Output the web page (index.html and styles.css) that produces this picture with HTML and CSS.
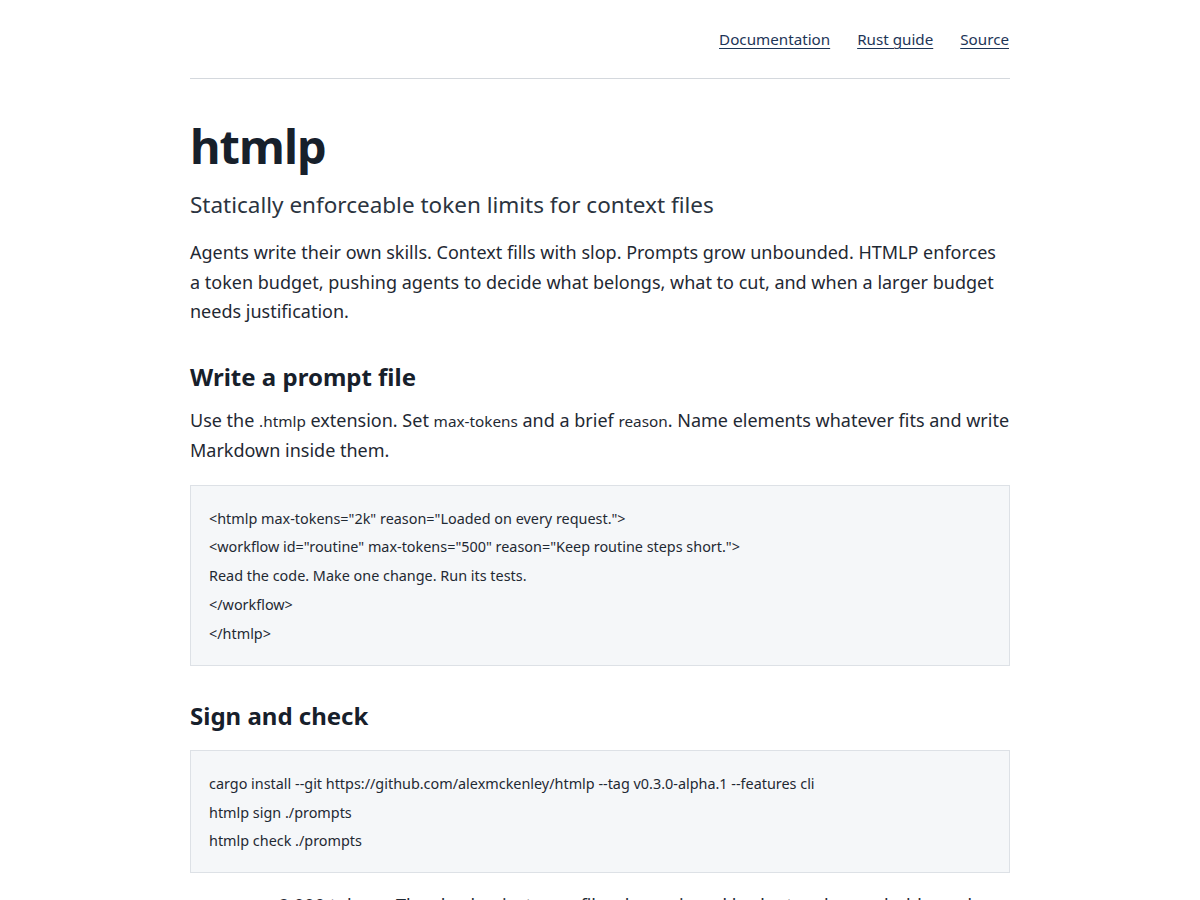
FILE: index.html
```html
<!DOCTYPE html>
<html lang="en">
<head>
<meta charset="utf-8">
<title>htmlp</title>
<link rel="stylesheet" href="styles.css">
</head>
<body>
<div class="page">
  <header class="site-header">
    <nav class="nav">
      <a href="#">Documentation</a>
      <a href="#">Rust guide</a>
      <a href="#">Source</a>
    </nav>
  </header>
  <main>
    <h1 class="title">htmlp</h1>
    <p class="subtitle">Statically enforceable token limits for context files</p>
    <p class="lead">Agents write their own skills. Context fills with slop. Prompts grow unbounded. HTMLP enforces a token budget, pushing agents to decide what belongs, what to cut, and when a larger budget needs justification.</p>

    <h2>Write a prompt file</h2>
    <p>Use the <code>.htmlp</code> extension. Set <code>max-tokens</code> and a brief <code>reason</code>. Name elements whatever fits and write Markdown inside them.</p>
    <pre class="code">&lt;htmlp max-tokens="2k" reason="Loaded on every request."&gt;
&lt;workflow id="routine" max-tokens="500" reason="Keep routine steps short."&gt;
Read the code. Make one change. Run its tests.
&lt;/workflow&gt;
&lt;/htmlp&gt;</pre>

    <h2>Sign and check</h2>
    <pre class="code">cargo install --git https://github.com/alexmckenley/htmlp --tag v0.3.0-alpha.1 --features cli
htmlp sign ./prompts
htmlp check ./prompts</pre>
    <p class="after"><code>max-tokens</code> 2,000 tokens. The check rejects any file whose signed budget no longer holds, and keeps the budget honest.</p>
  </main>
</div>
</body>
</html>
```

FILE: styles.css
```css
html, body {
  margin: 0;
  padding: 0;
  background: #ffffff;
}

body {
  font-family: "Noto Sans", "Open Sans", sans-serif;
  color: #1f2933;
  font-size: 18px;
  line-height: 1.65;
}

.page {
  width: 820px;
  margin: 0 auto;
}

.site-header {
  height: 79px;
  border-bottom: 1px solid #d4d8dd;
  display: flex;
  align-items: center;
  justify-content: flex-end;
  box-sizing: border-box;
}

.nav {
  display: flex;
  gap: 27px;
  font-size: 15.2px;
  line-height: 20px;
  padding-right: 1px;
}

.nav a {
  color: #1d3557;
  text-decoration: underline;
  text-underline-offset: 3px;
}

.title {
  font-size: 47px;
  font-weight: 700;
  letter-spacing: -0.02em;
  line-height: 1.2;
  color: #17202b;
  margin: 39px 0 0;
}

.subtitle {
  font-size: 22.5px;
  color: #2b3440;
  margin: 15px 0 0;
  line-height: 1.4;
}

p {
  margin: 14px 0 0;
}

.lead {
  margin-top: 17px;
}

h2 {
  font-size: 24px;
  font-weight: 700;
  color: #17202b;
  margin: 34px 0 0;
  line-height: 1.3;
}

h2 + p {
  margin-top: 14px;
}

code {
  font-family: "Noto Sans", sans-serif;
  font-size: 0.85em;
}

.code {
  font-family: "Noto Sans", sans-serif;
  font-size: 14.4px;
  line-height: 2;
  background: #f5f7f9;
  border: 1px solid #dde1e6;
  padding: 19px 18px 16px;
  margin: 19px 0 0;
  color: #1f2933;
  white-space: pre;
}

h2 + .code {
  margin-top: 19px;
}

.after {
  margin-top: 18px;
}
```
